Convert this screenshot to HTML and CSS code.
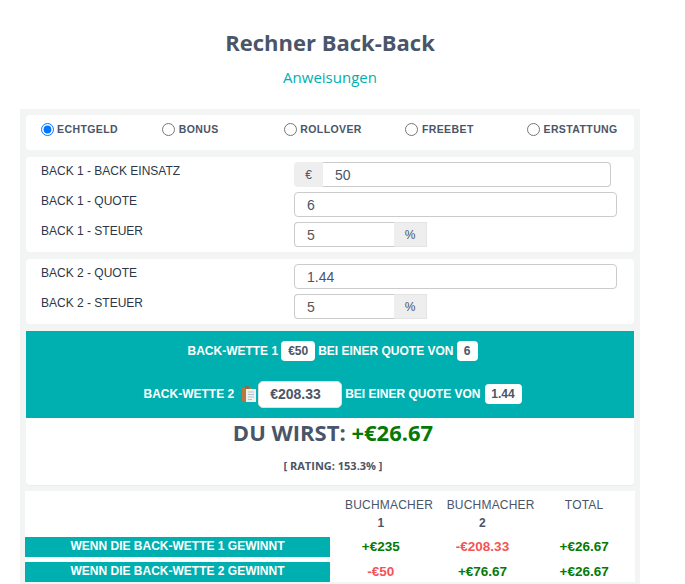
FILE: index.html
```html
<!DOCTYPE html>
<html lang="de">
<head>
<meta charset="utf-8">
<title>Rechner Back-Back</title>
<link rel="stylesheet" href="styles.css">
</head>
<body>
<header class="head">
  <h1 class="title">Rechner Back-Back</h1>
  <a class="help" href="#">Anweisungen</a>
</header>
<main class="panel">
  <section class="card radios">
    <label class="radio"><input type="radio" name="mode" checked><span>ECHTGELD</span></label>
    <label class="radio"><input type="radio" name="mode"><span>BONUS</span></label>
    <label class="radio"><input type="radio" name="mode"><span>ROLLOVER</span></label>
    <label class="radio"><input type="radio" name="mode"><span>FREEBET</span></label>
    <label class="radio"><input type="radio" name="mode"><span>ERSTATTUNG</span></label>
  </section>
  <section class="card form">
    <div class="row">
      <span class="label">BACK 1 - BACK EINSATZ</span>
      <div class="group group-euro"><span class="addon addon-left">€</span><input class="field field-right" value="50"></div>
    </div>
    <div class="row">
      <span class="label">BACK 1 - QUOTE</span>
      <input class="field field-full" value="6">
    </div>
    <div class="row">
      <span class="label">BACK 1 - STEUER</span>
      <div class="group group-pct"><input class="field field-left tax" value="5"><span class="addon addon-right">%</span></div>
    </div>
  </section>
  <section class="card form">
    <div class="row">
      <span class="label">BACK 2 - QUOTE</span>
      <input class="field field-full" value="1.44">
    </div>
    <div class="row">
      <span class="label">BACK 2 - STEUER</span>
      <div class="group group-pct"><input class="field field-left tax" value="5"><span class="addon addon-right">%</span></div>
    </div>
  </section>
  <section class="banner">
    <p class="line line-one">BACK-WETTE 1 <span class="pill">€50</span> BEI EINER QUOTE VON <span class="pill pill-odd">6</span></p>
    <p class="line line-two">BACK-WETTE 2
      <svg class="clip" width="14" height="16" viewBox="0 0 14 16" aria-hidden="true">
        <rect x="0" y="1.5" width="10" height="14" rx="1" fill="#b9783f"/>
        <rect x="3" y="0" width="4" height="3" rx="1" fill="#8d6a48"/>
        <rect x="4" y="3" width="10" height="13" fill="#eef1f1"/>
        <path d="M6 6h6M6 8.500h6M6 11h6M6 13.500h4" stroke="#b7c4c6" stroke-width="1"/>
      </svg>
      <input class="stake" value="€208.33"> BEI EINER QUOTE VON <span class="pill pill-odd2">1.44</span></p>
  </section>
  <section class="card result">
    <h2 class="outcome">DU WIRST: <span class="pos">+€26.67</span></h2>
    <p class="rating">[ RATING: 153.3% ]</p>
  </section>
  <section class="table">
    <div></div>
    <div class="th">BUCHMACHER <b>1</b></div>
    <div class="th">BUCHMACHER <b>2</b></div>
    <div class="th">TOTAL</div>
    <div class="case">WENN DIE BACK-WETTE 1 GEWINNT</div>
    <div class="val pos">+€235</div>
    <div class="val neg">-€208.33</div>
    <div class="val pos">+€26.67</div>
    <div class="case">WENN DIE BACK-WETTE 2 GEWINNT</div>
    <div class="val neg">-€50</div>
    <div class="val pos">+€76.67</div>
    <div class="val pos">+€26.67</div>
  </section>
</main>
</body>
</html>
```
FILE: styles.css
```css
* { box-sizing: border-box; }
html, body { margin: 0; padding: 0; background: #fff; overflow: hidden; }
body { height: 584px; font-family: "Liberation Sans", Arial, sans-serif; color: #4a5568; }

.head { height: 109px; padding-top: 27px; text-align: center; width: 660px; }
.title { margin: 0; font: 700 22px/30px "Open Sans", sans-serif; color: #4a5568; }
.help { display: block; margin-top: 10px; font: 400 15px/20px "Open Sans", sans-serif; color: #00afaf; text-decoration: none; }

.panel { width: 620px; height: 475px; margin-left: 20px; padding: 6px 6px 0; background: #f3f4f4; }
.card { background: #fff; border-radius: 4px; }

.radios { display: grid; grid-template-columns: repeat(5, 1fr); height: 35px; padding-top: 7px; margin-bottom: 7px; }
.radio { display: flex; align-items: flex-start; padding-left: 14.6px; font-size: 10.5px; font-weight: 700; letter-spacing: .4px; line-height: 14px; color: #4a5568; }
.radio input { width: 13px; height: 13px; margin: 1px 3.5px 0 0; accent-color: #0075ff; }

.form { display: flex; flex-direction: column; gap: 5px; padding: 5px 0; margin-bottom: 7px; }
.row { display: grid; grid-template-columns: 268px 1fr; height: 25px; }
.label { padding: 2px 0 0 15px; font-size: 12px; line-height: 14px; color: #2d3748; }
.field { height: 25px; border: 1px solid #cbcbcb; padding: 0 12px; font: 14px "Liberation Sans", Arial, sans-serif; color: #4a5568; background: #fff; outline: 0; }
.field-full { width: 323px; border-radius: 4px; }
.group { display: flex; height: 25px; }
.group-euro { width: 317px; }
.group-pct { width: 133px; }
.field-right { flex: 1; min-width: 0; border-radius: 0 4px 4px 0; border-left: 0; }
.field-left { width: 100px; border-radius: 4px 0 0 4px; border-right: 0; }
.tax { color: #5a5555; }
.addon { display: flex; align-items: center; justify-content: center; background: #eeeeee; font-size: 12px; color: #4a5568; }
.addon-left { width: 29px; border-radius: 4px 0 0 4px; }
.addon-right { width: 33px; border: 1px solid #e4e4e4; border-left: 0; }

.banner { height: 87px; background: #00afaf; color: #fff; font-size: 12px; font-weight: 700; text-align: center; overflow: hidden; }
.line { display: flex; align-items: center; justify-content: center; gap: 4px; margin: 0; padding-left: 5px; }
.line-one { height: 40px; gap: 3px; }
.line-two { height: 46px; }
.pill { display: inline-block; padding: 0 7px; height: 20px; line-height: 20px; background: #fff; border-radius: 4px; color: #4a5568; }
.pill-odd { width: 21px; padding: 0; }
.pill-odd2 { width: 37px; padding: 0; }
.clip { margin: 0 -2px 0 4px; }
.stake { width: 84px; height: 27px; margin-right: -1px; border: 1px solid #e2e2e2; border-radius: 5px; padding: 0 11px; font: 700 14px "Liberation Sans", Arial, sans-serif; color: #4a5568; background: #fff; outline: 0; }

.result { height: 67px; margin-bottom: 6px; padding-left: 6px; border-radius: 0 0 4px 4px; text-align: center; box-shadow: 0 1px 1px #eceeee; }
.outcome { margin: 0; font: 700 22px/28px "Open Sans", sans-serif; color: #4a5568; }
.rating { margin: 13px 0 0; font: 700 11px/14px "Open Sans", sans-serif; color: #4a5568; }
.pos { color: #047a04; }
.neg { color: #f25555; }

.table { display: grid; grid-template-columns: 305px repeat(3, minmax(0, 1fr)); grid-template-rows: 41px 20px 20px; row-gap: 5px; margin: 0 -1px; width: 610px; height: 91px; background: #fff; align-content: start; }
.th { padding: 5px 15px 0; font-size: 12px; line-height: 18px; letter-spacing: .2px; text-align: center; color: #4a5568; }
.th b { display: block; }
.case { background: #00afaf; color: #fff; font-size: 12px; font-weight: 700; line-height: 18px; text-align: center; }
.val { font-size: 13.5px; font-weight: 700; line-height: 20px; text-align: center; }
```
